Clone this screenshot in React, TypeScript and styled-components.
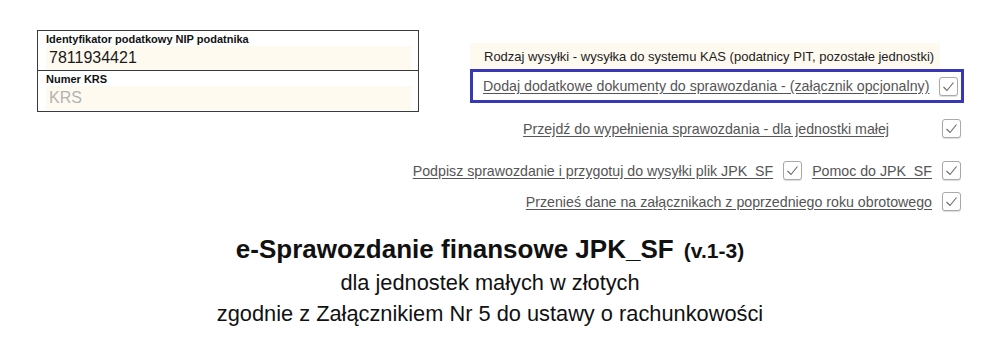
import React from "react";
import styled, { createGlobalStyle } from "styled-components";

const GlobalStyle = createGlobalStyle`
  html, body {
    margin: 0;
    padding: 0;
    background: #ffffff;
  }
  body {
    font-family: "Liberation Sans", Arial, sans-serif;
    color: #1a1a1a;
  }
`;

const Page = styled.div`
  width: 996px;
  height: 346px;
  box-sizing: border-box;
  padding-top: 30px;
  overflow: hidden;
`;

const Top = styled.div`
  display: flex;
  align-items: flex-start;
`;

const IdBox = styled.div`
  margin-left: 37px;
  width: 382px;
  box-sizing: border-box;
  border: 1.5px solid #3a3a3a;
  display: flex;
  flex-direction: column;
`;

const IdField = styled.div<{ $last?: boolean }>`
  height: 40px;
  box-sizing: border-box;
  padding: 2px 7px 0 8px;
  border-bottom: ${(p) => (p.$last ? "none" : "1.5px solid #3a3a3a")};
`;

const FieldLabel = styled.div`
  font-size: 11px;
  font-weight: bold;
  line-height: 13px;
  color: #111;
`;

const FieldInput = styled.div<{ $placeholder?: boolean }>`
  height: 24px;
  background: #fffaf0;
  font-size: 16px;
  line-height: 24px;
  padding-left: 3px;
  color: ${(p) => (p.$placeholder ? "#b3b3b3" : "#1a1a1a")};
`;

const Actions = styled.div`
  margin-left: 51px;
  margin-top: 13px;
  width: 494px;
  display: flex;
  flex-direction: column;
  align-items: flex-end;
`;

const SendType = styled.div`
  align-self: flex-start;
  width: 470px;
  height: 26px;
  box-sizing: border-box;
  padding-left: 14px;
  background: #fffaf0;
  font-size: 13px;
  line-height: 28px;
  color: #222;
`;

const Highlight = styled.div`
  align-self: stretch;
  height: 34px;
  box-sizing: border-box;
  border: 3px solid #3838b5;
  display: flex;
  align-items: center;
  padding-left: 10px;
  padding-right: 1px;
  gap: 10px;
`;

const Row = styled.div<{ $gap?: number; $top: number }>`
  display: flex;
  align-items: center;
  margin-top: ${(p) => p.$top}px;
  margin-right: 3px;
  gap: ${(p) => p.$gap ?? 10}px;
`;

const Link = styled.a`
  font-size: 14.2px;
  color: #555;
  text-decoration: underline;
  text-underline-offset: 2px;
  white-space: nowrap;
  cursor: pointer;
`;

const Box = styled.span`
  display: inline-flex;
  align-items: center;
  justify-content: center;
  width: 19px;
  height: 19px;
  box-sizing: border-box;
  border: 1px solid #a9a9a9;
  border-radius: 3px;
  background: #fff;
  box-shadow: 0 1px 1px rgba(0, 0, 0, 0.14);
  flex: none;
`;

const Check = () => (
  <Box>
    <svg width="15" height="15" viewBox="0 0 15 15">
      <polyline
        points="2.5,8 6,11.5 12.5,3.5"
        fill="none"
        stroke="#6a6a6a"
        strokeWidth="1.1"
      />
    </svg>
  </Box>
);

const Heading = styled.div`
  margin-top: 22px;
  display: flex;
  flex-direction: column;
  align-items: center;
  padding-right: 16px;
`;

const Title = styled.div`
  font-size: 26px;
  font-weight: bold;
  line-height: 32px;
  color: #111;
`;

const Version = styled.span`
  font-size: 21px;
  margin-left: 3px;
`;

const Sub = styled.div`
  font-size: 21.8px;
  line-height: 31px;
  color: #111;
`;

export default function App() {
  return (
    <>
      <GlobalStyle />
      <Page>
        <Top>
          <IdBox>
            <IdField>
              <FieldLabel>Identyfikator podatkowy NIP podatnika</FieldLabel>
              <FieldInput>7811934421</FieldInput>
            </IdField>
            <IdField $last>
              <FieldLabel>Numer KRS</FieldLabel>
              <FieldInput $placeholder>KRS</FieldInput>
            </IdField>
          </IdBox>
          <Actions>
            <SendType>
              Rodzaj wysyłki - wysyłka do systemu KAS (podatnicy PIT, pozostałe jednostki)
            </SendType>
            <Highlight>
              <Link>Dodaj dodatkowe dokumenty do sprawozdania - (załącznik opcjonalny)</Link>
              <Check />
            </Highlight>
            <Row $top={16} $gap={53}>
              <Link>Przejdź do wypełnienia sprawozdania - dla jednostki małej</Link>
              <Check />
            </Row>
            <Row $top={23}>
              <Link>Podpisz sprawozdanie i przygotuj do wysyłki plik JPK_SF</Link>
              <Check />
              <Link>Pomoc do JPK_SF</Link>
              <Check />
            </Row>
            <Row $top={12}>
              <Link>Przenieś dane na załącznikach z poprzedniego roku obrotowego</Link>
              <Check />
            </Row>
          </Actions>
        </Top>
        <Heading>
          <Title>
            e-Sprawozdanie finansowe JPK_SF <Version>(v.1-3)</Version>
          </Title>
          <Sub>dla jednostek małych w złotych</Sub>
          <Sub>zgodnie z Załącznikiem Nr 5 do ustawy o rachunkowości</Sub>
        </Heading>
      </Page>
    </>
  );
}
